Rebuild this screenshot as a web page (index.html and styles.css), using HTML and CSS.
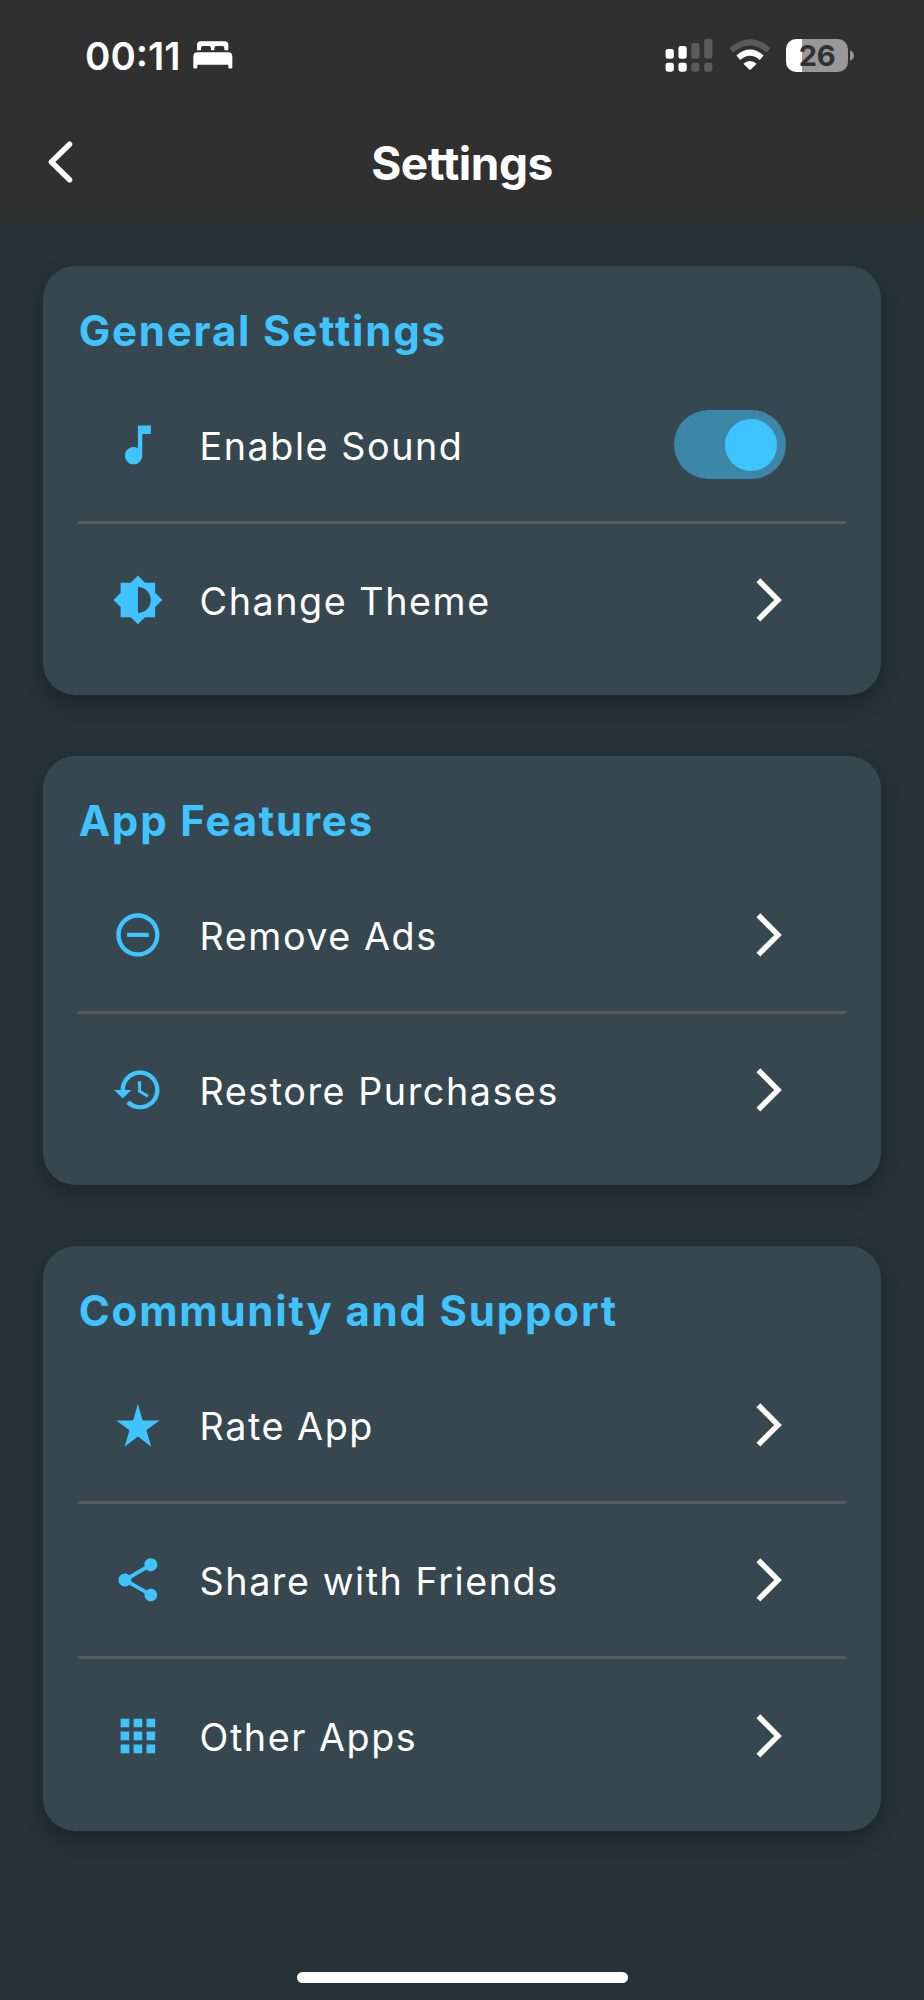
FILE: index.html
```html
<!DOCTYPE html>
<html lang="en">
<head>
<meta charset="utf-8">
<title>Settings</title>
<link rel="stylesheet" href="styles.css">
</head>
<body>
<svg width="0" height="0" class="defs" aria-hidden="true">
  <symbol id="chevron" viewBox="0 0 24 24"><path d="M6.23 20.23 8 22 18 12 8 2 6.23 3.77 14.46 12z"/></symbol>
</svg>
<header class="header">
  <div class="status">
    <div class="status-left">
      <span class="time">00:11</span>
      <svg class="bed" viewBox="0 0 120 84" fill="#fff"><path d="M12 28V12Q12 1 23 1H95Q106 1 106 12V28H94V21Q94 15 88 15H70Q64 15 64 21V28H54V21Q54 15 48 15H30Q24 15 24 21V28Z"/><path d="M1 81V47Q1 34 14 34H105Q118 34 118 47V81Q112 84 106 81V71H13V81Q7 84 1 81Z"/></svg>
    </div>
    <div class="status-right">
      <svg class="signal" viewBox="0 0 144 100"><g fill="#fff"><rect x="1" y="30" width="25" height="30" rx="7"/><rect x="40" y="21" width="25" height="39" rx="7"/><rect x="1" y="72" width="25" height="27" rx="7"/><rect x="40" y="72" width="25" height="27" rx="7"/></g><g fill="#5b5b5b"><rect x="79" y="12" width="25" height="48" rx="7"/><rect x="118" y="0" width="25" height="60" rx="7"/><rect x="79" y="72" width="25" height="27" rx="7"/><rect x="118" y="72" width="25" height="27" rx="7"/></g></svg>
      <svg class="wifi" viewBox="0 0 126 96"><path d="M7 34Q63-14 119 34" fill="none" stroke="#5b5b5b" stroke-width="18"/><path d="M28 56Q63 26 98 56" fill="none" stroke="#fff" stroke-width="18"/><path d="M43 74Q63 58 83 74L66 91Q63 94 60 91Z" fill="#fff"/></svg>
      <div class="battery"><span class="battery-level">26</span></div>
      <svg class="nub" viewBox="0 0 12 32"><path d="M0 0Q12 5 12 16T0 32Z" fill="#989898"/></svg>
    </div>
  </div>
  <div class="appbar">
    <svg class="back" viewBox="0 0 26 42"><path d="M22.6 3.2 4.4 21 22.6 38.8" fill="none" stroke="#fff" stroke-width="5.4" stroke-linecap="round" stroke-linejoin="round"/></svg>
    <h1 class="title">Settings</h1>
  </div>
</header>
<main class="content">
  <section class="card">
    <h2 class="heading">General Settings</h2>
    <div class="row">
      <svg class="icon" viewBox="0 0 24 24"><path d="M12 3v10.55c-.59-.34-1.27-.55-2-.55-2.21 0-4 1.79-4 4s1.79 4 4 4 4-1.79 4-4V7h4V3h-6z"/></svg>
      <span class="label">Enable Sound</span>
      <span class="switch"><span class="thumb"></span></span>
    </div>
    <hr class="divider">
    <div class="row">
      <svg class="icon" viewBox="0 0 24 24"><path d="M20 15.31L23.31 12 20 8.69V4h-4.69L12 .69 8.69 4H4v4.69L.69 12 4 15.31V20h4.69L12 23.31 15.31 20H20v-4.69zM12 18V6c3.31 0 6 2.69 6 6s-2.69 6-6 6z"/></svg>
      <span class="label">Change Theme</span>
      <svg class="chevron"><use href="#chevron"/></svg>
    </div>
  </section>
  <section class="card">
    <h2 class="heading">App Features</h2>
    <div class="row">
      <svg class="icon" viewBox="0 0 24 24"><path d="M7 11v2h10v-2H7zm5-9C6.48 2 2 6.48 2 12s4.48 10 10 10 10-4.48 10-10S17.52 2 12 2zm0 18c-4.41 0-8-3.59-8-8s3.59-8 8-8 8 3.59 8 8-3.59 8-8 8z"/></svg>
      <span class="label">Remove Ads</span>
      <svg class="chevron"><use href="#chevron"/></svg>
    </div>
    <hr class="divider">
    <div class="row">
      <svg class="icon" viewBox="0 0 24 24"><path d="M13 3c-4.97 0-9 4.03-9 9H1l3.89 3.89.07.14L9 12H6c0-3.87 3.13-7 7-7s7 3.13 7 7-3.13 7-7 7c-1.93 0-3.68-.79-4.94-2.06l-1.42 1.42C8.27 19.99 10.51 21 13 21c4.97 0 9-4.03 9-9s-4.03-9-9-9zm-1 5v5l4.28 2.54.72-1.21-3.5-2.08V8H12z"/></svg>
      <span class="label">Restore Purchases</span>
      <svg class="chevron"><use href="#chevron"/></svg>
    </div>
  </section>
  <section class="card">
    <h2 class="heading">Community and Support</h2>
    <div class="row">
      <svg class="icon" viewBox="0 0 24 24"><path d="M12 2.2l2.2 7.8H22l-6.1 4.5 2.3 7.6-6.2-4.7-6.2 4.7 2.3-7.6L2 10h7.8z"/></svg>
      <span class="label">Rate App</span>
      <svg class="chevron"><use href="#chevron"/></svg>
    </div>
    <hr class="divider">
    <div class="row">
      <svg class="icon" viewBox="0 0 24 24"><path d="M18 16.08c-.76 0-1.44.3-1.96.77L8.91 12.7c.05-.23.09-.46.09-.7s-.04-.47-.09-.7l7.05-4.11c.54.5 1.25.81 2.04.81 1.66 0 3-1.34 3-3s-1.34-3-3-3-3 1.34-3 3c0 .24.04.47.09.7L8.04 9.81C7.5 9.31 6.79 9 6 9c-1.66 0-3 1.34-3 3s1.34 3 3 3c.79 0 1.5-.31 2.04-.81l7.12 4.16c-.05.21-.08.43-.08.65 0 1.61 1.31 2.92 2.92 2.92 1.61 0 2.92-1.31 2.92-2.92s-1.31-2.92-2.92-2.92z"/></svg>
      <span class="label">Share with Friends</span>
      <svg class="chevron"><use href="#chevron"/></svg>
    </div>
    <hr class="divider">
    <div class="row">
      <svg class="icon" viewBox="0 0 24 24"><path d="M4 8h4V4H4v4zm6 12h4v-4h-4v4zm-6 0h4v-4H4v4zm0-6h4v-4H4v4zm6 0h4v-4h-4v4zm6-10v4h4V4h-4zm-6 4h4V4h-4v4zm6 6h4v-4h-4v4zm0 6h4v-4h-4v4z"/></svg>
      <span class="label">Other Apps</span>
      <svg class="chevron"><use href="#chevron"/></svg>
    </div>
  </section>
</main>
<div class="home-indicator"></div>
</body>
</html>
```
FILE: styles.css
```css
/* 1rem = 10pt on a 428pt wide screen */
html { font-size: 21.589px; }
* { box-sizing: border-box; }
body {
  margin: 0;
  width: 924px;
  height: 2000px;
  display: flex;
  flex-direction: column;
  background: #263238;
  color: #fff;
  font-family: Inter, "Liberation Sans", sans-serif;
  overflow: hidden;
}
svg { display: block; flex: none; }
.defs { display: none; }
.header { height: 223px; background: #303030; flex: none; }
.status {
  height: 4.7rem;
  padding: 9px 70px 0 85px;
  display: flex;
  justify-content: space-between;
  align-items: center;
}
.status-left, .status-right { display: flex; align-items: center; }
.time { font-size: 38.5px; font-weight: 600; line-height: 44px; width: 108px; padding-top: 1px; letter-spacing: 0; white-space: nowrap; }
.bed { width: 40px; height: 28px; }
.signal { width: 48px; height: 33px; margin-right: 16px; }
.wifi { width: 42px; height: 32px; margin-right: 15px; }
.battery {
  width: 62px;
  height: 33px;
  border-radius: 10px;
  background: linear-gradient(to right, #fff 16.3px, #989898 16.3px);
  display: flex;
  align-items: center;
  justify-content: center;
}
.battery-level { color: #303030; font-size: 29px; font-weight: 700; line-height: 33px; letter-spacing: -0.2px; }
.nub { width: 4px; height: 11px; margin-left: 2px; }
.appbar {
  height: 5.6rem;
  display: grid;
  grid-template-columns: 1fr auto 1fr;
  align-items: center;
}
.back { width: 26px; height: 42px; margin-left: 47px; }
.title { margin: 0; padding-top: 2px; font-size: 46px; line-height: 56px; font-weight: 700; letter-spacing: -0.5px; }
.content { padding: 42.6px 2rem 0; display: flex; flex-direction: column; gap: 2.8rem; }
.card {
  padding: 1.6rem;
  border-radius: 1.5rem;
  background: #37474f;
  box-shadow: 0 0.4rem 0.8rem rgba(0, 0, 0, 0.26);
}
.heading {
  margin: 0;
  padding-left: 1px;
  height: 3.9rem;
  font-size: 42px;
  line-height: 62px;
  font-weight: 700;
  letter-spacing: 1.8px;
  color: #40c4ff;
  white-space: nowrap;
}
.row {
  height: 5.6rem;
  padding: 0 2.4rem 0 1.6rem;
  display: flex;
  align-items: center;
}
.icon { width: 2.4rem; height: 2.4rem; margin-right: 1.6rem; fill: #40c4ff; }
.label { flex: 1; padding: 2px 0 0 1px; font-size: 37.7px; line-height: 46px; letter-spacing: 1.55px; white-space: nowrap; }
.chevron { width: 2.4rem; height: 2.4rem; fill: #fff; }
.switch {
  width: 5.2rem;
  height: 3.2rem;
  margin-right: 0.4rem;
  padding: 0 0.4rem;
  border-radius: 1.6rem;
  background: #3c86a7;
  display: flex;
  align-items: center;
  justify-content: flex-end;
}
.thumb { width: 2.4rem; height: 2.4rem; border-radius: 50%; background: #40c4ff; }
.divider { height: 3px; margin: calc(0.8rem - 1.5px) 0; border: 0; background: #595c5e; }
.home-indicator {
  width: 331px;
  height: 11px;
  margin: auto auto 17.5px;
  border-radius: 6px;
  background: #fff;
}
```
